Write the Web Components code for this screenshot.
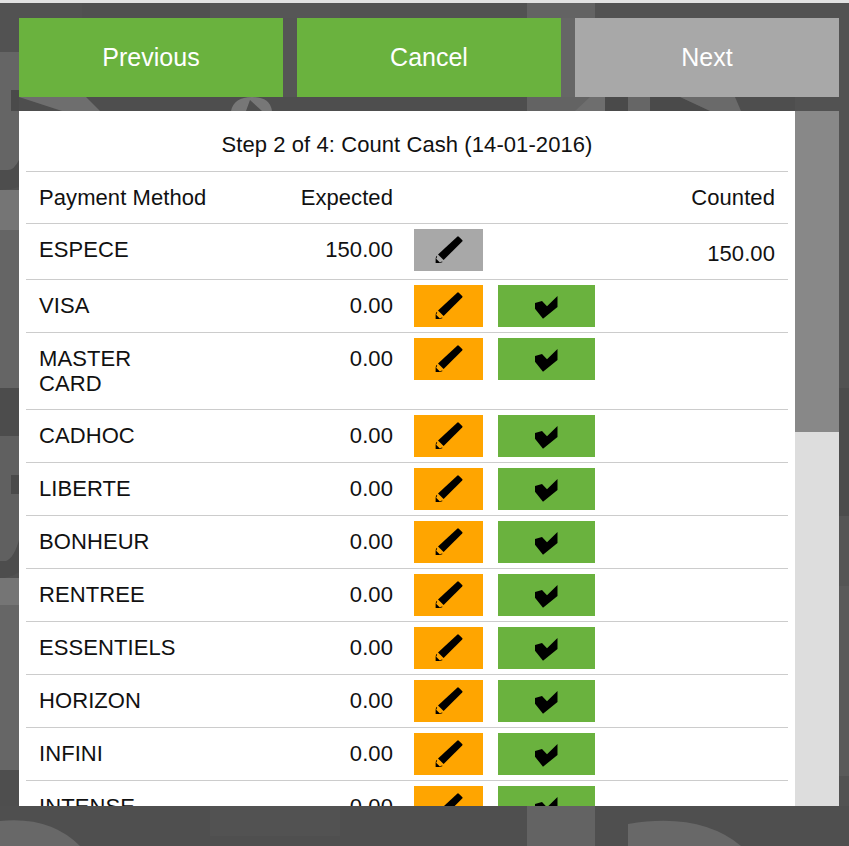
<!DOCTYPE html>
<html>
<head>
<meta charset="utf-8">
<style>
  html, body { margin: 0; padding: 0; height: 846px; overflow: hidden; background: #525252; }
</style>
</head>
<body>
<till-screen>
  <wizard-button slot="actions">Previous</wizard-button>
  <wizard-button slot="actions">Cancel</wizard-button>
  <wizard-button slot="actions" disabled>Next</wizard-button>
  <count-table slot="content">
    <count-row name="ESPECE" expected="150.00" counted="150.00" locked></count-row>
    <count-row name="VISA" expected="0.00"></count-row>
    <count-row name="MASTER CARD" expected="0.00" wrap></count-row>
    <count-row name="CADHOC" expected="0.00"></count-row>
    <count-row name="LIBERTE" expected="0.00"></count-row>
    <count-row name="BONHEUR" expected="0.00"></count-row>
    <count-row name="RENTREE" expected="0.00"></count-row>
    <count-row name="ESSENTIELS" expected="0.00"></count-row>
    <count-row name="HORIZON" expected="0.00"></count-row>
    <count-row name="INFINI" expected="0.00"></count-row>
    <count-row name="INTENSE" expected="0.00"></count-row>
  </count-table>
</till-screen>

<script>
const PENCIL = `<svg width="28" height="28" viewBox="0 0 28 28"><path d="M22.2 .7 Q23 0 23.8 .7 L27.2 4 Q28 4.8 27.2 5.6 L8.6 24 L3 18.6 Z"/><path d="M.6 22.2 L5.4 27 L.6 27 Z"/><path d="M.6 22.2 L1.6 19.8 L2.2 20.4 L1.4 22.4 Z"/><path d="M5.4 27 L7.6 26 L7 25.4 L5 26.2 Z"/></svg>`;
const CHECK = `<svg width="23" height="23" viewBox="0 0 23 23"><path d="M0 7 L7 5 L12 10.3 L22.5 0 L22.5 11 L8 22.7 L0 12.7 Z"/></svg>`;

class TillScreen extends HTMLElement {
  constructor() {
    super();
    this.attachShadow({ mode: "open" });
    this.shadowRoot.innerHTML = `
    <style>
      :host { display: block; position: relative; width: 849px; height: 846px; overflow: hidden; background: #525252; }
      .strip { height: 3px; background: #e2e2e2; position: relative; }
      .bg { position: absolute; left: 0; top: 0; }
      .wrap { position: relative; padding: 15px 10px 0 19px; }
      .actions { display: grid; grid-template-columns: repeat(3, 264px); gap: 14px; height: 79px; }
      .panel { display: flex; height: 695px; margin-top: 14px; }
      .sheet { width: 776px; background: #fff; overflow: hidden; }
      .bar { width: 44px; background: #ddd; }
      .thumb { height: 321px; background: #888; }
    </style>
    <svg class="bg" width="849" height="846" viewBox="0 0 849 846">
      <rect width="849" height="846" fill="#525252"/>
      <rect x="82" y="3" width="130" height="15" fill="#505050"/>
      <rect x="210" y="3" width="130" height="15" fill="#565656"/>
      <rect x="527" y="3" width="68" height="15" fill="#636363"/>
      <!-- left strip -->
      <rect x="0" y="52" width="19" height="118" fill="#656565"/>
      <path d="M0 170 H8 Q14 170 19 160 V187 Q10 190 0 190 Z" fill="#4d4d4d"/>
      <rect x="0" y="190" width="19" height="40" fill="#757575"/>
      <rect x="0" y="230" width="19" height="158" fill="#656565"/>
      <rect x="0" y="388" width="19" height="48" fill="#4c4c4c"/>
      <rect x="0" y="436" width="19" height="125" fill="#606060"/>
      <path d="M0 561 H6 Q14 558 19 540 V572 Q10 578 0 578 Z" fill="#4d4d4d"/>
      <rect x="0" y="578" width="19" height="27" fill="#757575"/>
      <rect x="0" y="605" width="19" height="165" fill="#666"/>
      <rect x="11" y="90" width="8" height="21" fill="#4a4a4a"/>
      <rect x="11" y="475" width="8" height="19" fill="#4a4a4a"/>
      <rect x="0" y="770" width="19" height="76" fill="#4e4e4e"/>
      <!-- band under the buttons -->
      <rect x="19" y="97" width="776" height="14" fill="#4e4e4e"/>
      <path d="M19 97 H86 L100 111 H62 Z" fill="#6e6e6e"/>
      <path d="M231 111 Q234 97 252 97 Q270 97 272 111 H262 L250 100 L246 111 Z" fill="#777"/>
      <rect x="283" y="18" width="14" height="79" fill="#555"/>
      <rect x="561" y="18" width="14" height="79" fill="#666"/>
      <rect x="527" y="97" width="68" height="14" fill="#636363"/>
      <path d="M575 111 L590 97 H605 V111 Z" fill="#6e6e6e"/>
      <rect x="605" y="97" width="23" height="14" fill="#4a4a4a"/>
      <rect x="628" y="97" width="22" height="14" fill="#666"/>
      <path d="M650 97 H680 L710 111 H650 Z" fill="#4a4a4a"/>
      <path d="M680 97 H735 L741 111 H710 Z" fill="#6a6a6a"/>
      <!-- right strip -->
      <rect x="839" y="388" width="10" height="128" fill="#4c4c4c"/>
      <rect x="839" y="516" width="10" height="70" fill="#555"/>
      <rect x="839" y="586" width="10" height="190" fill="#5a5a5a"/>
      <!-- bottom band -->
      <rect x="0" y="806" width="849" height="40" fill="#4f4f4f"/>
      <rect x="210" y="806" width="130" height="30" fill="#525252"/>
      <rect x="527" y="806" width="68" height="40" fill="#636363"/>
      <path d="M0 821 Q50 816 80 846 H0 Z" fill="#686868"/>
      <path d="M628 824 Q700 812 741 846 H628 Z" fill="#686868"/>
    </svg>
    <div class="strip"></div>
    <div class="wrap">
      <div class="actions"><slot name="actions"></slot></div>
      <div class="panel">
        <div class="sheet"><slot name="content"></slot></div>
        <div class="bar"><div class="thumb"></div></div>
      </div>
    </div>`;
  }
}

class WizardButton extends HTMLElement {
  constructor() {
    super();
    this.attachShadow({ mode: "open" });
    this.shadowRoot.innerHTML = `
    <style>
      :host { display: flex; align-items: center; justify-content: center; background: #6ab23e; color: #fff; font: 25px "Liberation Sans", Arial, sans-serif; }
      :host([disabled]) { background: #a8a8a8; }
    </style>
    <slot></slot>`;
  }
}

class CountTable extends HTMLElement {
  constructor() {
    super();
    this.attachShadow({ mode: "open" });
    this.shadowRoot.innerHTML = `
    <style>
      :host { display: block; padding: 0 7px; color: #111; font: 22px "Liberation Sans", Arial, sans-serif; letter-spacing: .08px; }
      .title { box-sizing: border-box; height: 61px; padding-top: 7px; display: flex; align-items: center; justify-content: center; border-bottom: 1px solid #ccc; }
      .head { box-sizing: border-box; height: 52px; display: grid; grid-template-columns: 13px 155px 199px 1fr 13px; align-items: center; border-bottom: 1px solid #ccc; white-space: nowrap; }
      .r { text-align: right; }
    </style>
    <div class="title">Step 2 of 4: Count Cash (14-01-2016)</div>
    <div class="head"><span></span><span>Payment Method</span><span class="r">Expected</span><span class="r">Counted</span><span></span></div>
    <slot></slot>`;
  }
}

class CountRow extends HTMLElement {
  constructor() {
    super();
    this.attachShadow({ mode: "open" });
  }

  connectedCallback() {
    const locked = this.hasAttribute("locked");
    const counted = this.getAttribute("counted") || "";
    this.shadowRoot.innerHTML = `
    <style>
      :host { box-sizing: border-box; display: grid; grid-template-columns: 13px 155px 199px 21px 69px 15px 97px 1fr 13px; align-items: start; height: 53px; padding-top: 5px; border-bottom: 1px solid #ccc; }
      :host([locked]) { height: 56px; }
      :host([wrap]) { height: 77px; }
      .name, .amount { line-height: 41px; }
      .name { width: 100px; }
      :host([wrap]) .name { line-height: 25px; padding-top: 8px; }
      .amount, .counted { text-align: right; }
      .counted { line-height: 41px; padding-top: 4px; }
      .btn { height: 42px; display: flex; align-items: center; justify-content: center; }
      .edit { background: #ffa500; }
      :host([locked]) .edit { background: #a8a8a8; }
      .ok { background: #6ab23e; }
      .ok svg { margin-top: 2px; }
      svg { display: block; }
    </style>
    <span></span>
    <div class="name">${this.getAttribute("name")}</div>
    <div class="amount">${this.getAttribute("expected")}</div>
    <span></span>
    <div class="btn edit">${PENCIL}</div>
    <span></span>
    ${locked ? "<span></span>" : `<div class="btn ok">${CHECK}</div>`}
    <div class="counted">${counted}</div>
    <span></span>`;
  }
}

customElements.define("till-screen", TillScreen);
customElements.define("wizard-button", WizardButton);
customElements.define("count-table", CountTable);
customElements.define("count-row", CountRow);
</script>
</body>
</html>
